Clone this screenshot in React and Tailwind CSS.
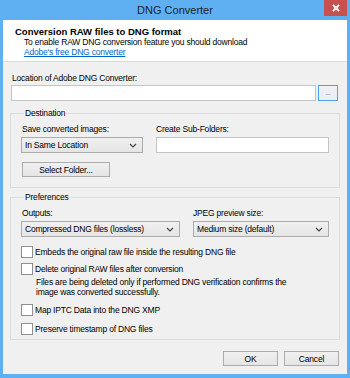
import React from 'react';

const font = { fontFamily: '"Liberation Sans", Arial, sans-serif' };

function Chevron() {
  return (
    <svg width="8" height="5" viewBox="0 0 8 5" className="shrink-0">
      <path d="M1 1 L4 4 L7 1" fill="none" stroke="#444" strokeWidth="1.2" />
    </svg>
  );
}

function Select({ value, className }) {
  return (
    <div className={`h-[16px] flex items-center justify-between pl-[3px] pr-[5px] border border-[#acacac] bg-gradient-to-b from-[#f0f0f0] to-[#e5e5e5] ${className}`}>
      <span>{value}</span>
      <Chevron />
    </div>
  );
}

function Button({ children, className }) {
  return (
    <div className={`h-[15px] flex items-center justify-center border border-[#acacac] bg-gradient-to-b from-[#f0f0f0] to-[#e5e5e5] ${className}`}>
      {children}
    </div>
  );
}

function Check({ label, className }) {
  return (
    <div className={`flex items-center h-[12px] ${className}`}>
      <div className="w-[12px] h-[12px] border border-[#8f8f8f] bg-white shrink-0" />
      <span className="ml-[2px]">{label}</span>
    </div>
  );
}

export default function App() {
  return (
    <div style={font} className="w-[350px] h-[378px] bg-[#5eb0f3] flex flex-col text-[8.5px] leading-[10px] tracking-[-0.2px] text-black">
      <div className="relative h-[20px] flex items-center justify-center">
        <span className="text-[11px] tracking-normal text-[#222]">DNG Converter</span>
        <div className="absolute right-[3px] top-0 w-[23px] h-[16px] bg-[#c75050] flex items-center justify-center">
          <svg width="8" height="8" viewBox="0 0 8 8">
            <path d="M1 1 L7 7 M7 1 L1 7" stroke="#fff" strokeWidth="1.8" />
          </svg>
        </div>
      </div>

      <div className="mx-[3px] mb-[4px] flex-1 bg-[#f0f0f0] flex flex-col">
        <div className="h-[42px] bg-white border-b border-[#dadada] pl-[12px] pt-[7px]">
          <div className="font-bold text-[9.5px] tracking-normal">Conversion RAW files to DNG format</div>
          <div className="pl-[9px]">To enable RAW DNG conversion feature you should download</div>
          <div className="pl-[9px] text-[#0066cc] underline">Adobe's free DNG converter</div>
        </div>

        <div className="pl-[8px] pr-[9px] mt-[11px]">
          <div className="ml-[1px]">Location of Adobe DNG Converter:</div>
          <div className="flex gap-[2px] mt-[2px]">
            <div className="flex-1 h-[16px] bg-white border border-[#c4c4c4]" />
            <div className="w-[20px] h-[16px] border border-[#4ea0f0] bg-[#eceff3] flex items-end justify-center pb-[4px]">
              <span className="text-[#777] text-[7px] leading-[7px]">...</span>
            </div>
          </div>
        </div>

        <fieldset className="mx-[7px] mt-[7px] border border-[#dcdcdc] px-[10px] pb-[10px]">
          <legend className="ml-[3px] px-[1px]">Destination</legend>
          <div className="flex mt-[6px]">
            <div className="w-[123px]">
              <div className="ml-[1px]">Save converted images:</div>
              <Select value="In Same Location" className="mt-[3px] w-[122px]" />
            </div>
            <div className="ml-[12px] flex-1">
              <div>Create Sub-Folders:</div>
              <div className="mt-[3px] h-[16px] bg-white border border-[#c4c4c4]" />
            </div>
          </div>
          <Button className="mt-[9px] w-[88px] ml-[1px]">Select Folder...</Button>
        </fieldset>

        <fieldset className="mx-[7px] mt-[4px] border border-[#dcdcdc] px-[10px] pb-[4px]">
          <legend className="ml-[3px] px-[1px]">Preferences</legend>
          <div className="flex mt-[6px]">
            <div className="w-[159px]">
              <div className="ml-[1px]">Outputs:</div>
              <Select value="Compressed DNG files (lossless)" className="mt-[3px] w-[159px]" />
            </div>
            <div className="ml-[13px] flex-1">
              <div>JPEG preview size:</div>
              <Select value="Medium size (default)" className="mt-[3px]" />
            </div>
          </div>
          <Check className="mt-[9px]" label="Embeds the original raw file inside the resulting DNG file" />
          <Check className="mt-[5px]" label="Delete original RAW files after conversion" />
          <div className="mt-[2px] ml-[15px]">
            <div>Files are being deleted only if performed DNG verification confirms the</div>
            <div>image was converted successfully.</div>
          </div>
          <Check className="mt-[7px]" label="Map IPTC Data into the DNG XMP" />
          <Check className="mt-[7px]" label="Preserve timestamp of DNG files" />
        </fieldset>

        <div className="flex justify-end gap-[6px] pr-[8px] mt-[11px]">
          <Button className="w-[55px]">OK</Button>
          <Button className="w-[55px]">Cancel</Button>
        </div>
      </div>
    </div>
  );
}
